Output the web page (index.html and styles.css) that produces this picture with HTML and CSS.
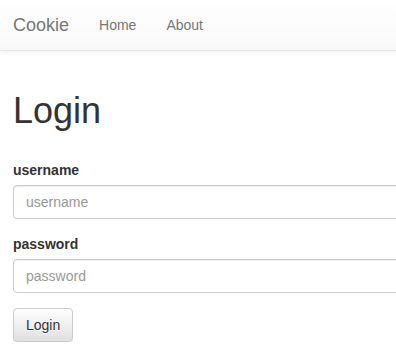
FILE: index.html
```html
<!DOCTYPE html>
<html lang="en">
<head>
  <meta charset="UTF-8">
  <meta name="viewport" content="width=device-width, initial-scale=1.0">
  <title>Cookie</title>
  <link rel="stylesheet" href="styles.css">
</head>
<body>
  <nav class="navbar">
    <a class="brand" href="#">Cookie</a>
    <ul class="nav">
      <li><a href="#">Home</a></li>
      <li><a href="#">About</a></li>
    </ul>
  </nav>

  <div class="container">
    <h1>Login</h1>
    <form class="login-form" onsubmit="return false">
      <div class="form-group">
        <label for="username">username</label>
        <input type="text" id="username" class="form-control" placeholder="username">
      </div>
      <div class="form-group">
        <label for="password">password</label>
        <input type="password" id="password" class="form-control" placeholder="password">
      </div>
      <button type="submit" class="btn">Login</button>
    </form>
  </div>
</body>
</html>
```

FILE: styles.css
```css
* {margin: 0; padding: 0; box-sizing: border-box;}
html {overflow: hidden;}
body {
  font-family: 'Liberation Sans', Arial, sans-serif;
  font-size: 14px;
  line-height: 1.42857143;
  color: #333;
  background: #fff;
  min-width: 440px;
}
a {text-decoration: none;}

.navbar {
  display: flex;
  align-items: center;
  min-height: 50px;
  border-bottom: 1px solid #e7e7e7;
  background: linear-gradient(to bottom, #fff 0, #f8f8f8 100%);
  box-shadow: inset 0 1px 0 rgba(255,255,255,0.15), 0 1px 5px rgba(0,0,0,0.075);
  margin-bottom: 20px;
}
.brand {
  font-size: 18px;
  line-height: 20px;
  padding: 15px 15px 15px 13px;
  color: #777;
  text-shadow: 0 1px 0 rgba(255,255,255,0.25);
}
.nav {
  display: flex;
  list-style: none;
}
.nav a {
  display: block;
  padding: 15px;
  line-height: 20px;
  color: #777;
  text-shadow: 0 1px 0 rgba(255,255,255,0.25);
}

.container {
  display: flow-root;
  padding: 0 0 0 13px;
}
h1 {
  font-size: 36px;
  font-weight: 500;
  line-height: 1.1;
  margin: 20px 0 29px;
}
.form-group {
  margin-bottom: 15px;
}
label {
  display: inline-block;
  font-weight: 700;
  margin-bottom: 5px;
}
.form-control {
  display: block;
  width: 100%;
  height: 34px;
  padding: 6px 12px;
  font-family: inherit;
  font-size: 14px;
  line-height: 1.42857143;
  color: #555;
  background: #fff;
  border: 1px solid #ccc;
  border-radius: 4px;
  box-shadow: inset 0 1px 1px rgba(0,0,0,0.075);
}
.form-control::placeholder {
  color: #999;
}
.btn {
  display: inline-block;
  padding: 6px 12px;
  font-family: inherit;
  font-size: 14px;
  line-height: 1.42857143;
  color: #333;
  border: 1px solid #ccc;
  border-radius: 4px;
  background: linear-gradient(to bottom, #fff 0, #e0e0e0 100%);
  text-shadow: 0 1px 0 #fff;
  box-shadow: inset 0 1px 0 rgba(255,255,255,0.15), 0 1px 1px rgba(0,0,0,0.075);
  cursor: pointer;
}
```
